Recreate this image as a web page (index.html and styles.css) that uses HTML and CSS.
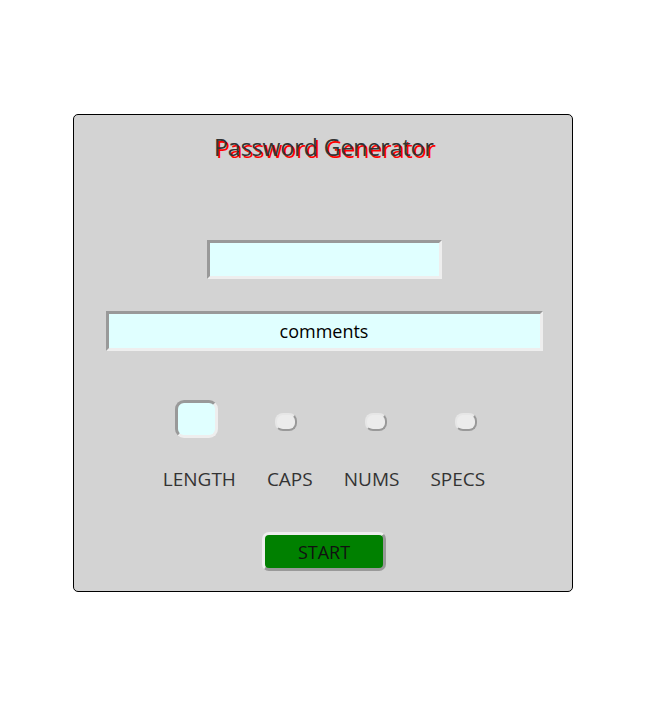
FILE: index.html
```html
<!DOCTYPE html>
<html>
<head>
<meta charset="utf-8">
<link rel="stylesheet" href="styles.css">
</head>
<body>
<div class="card">
  <h1 class="title">Password Generator</h1>
  <input class="field field-short" type="text" value="">
  <input class="field field-long" type="text" value="comments">
  <div class="boxes">
    <div class="cell"><span class="box box-big"></span></div>
    <div class="cell"><span class="box box-small"></span></div>
    <div class="cell"><span class="box box-small"></span></div>
    <div class="cell"><span class="box box-small"></span></div>
  </div>
  <div class="labels">
    <span>LENGTH</span>
    <span>CAPS</span>
    <span>NUMS</span>
    <span>SPECS</span>
  </div>
  <button class="start">START</button>
</div>
</body>
</html>
```
FILE: styles.css
```css
html, body {
  margin: 0;
  padding: 0;
  background: #ffffff;
}
body {
  font-family: "Open Sans", "Noto Sans", sans-serif;
  color: #333333;
}
.card {
  box-sizing: border-box;
  width: 500px;
  height: 478px;
  margin: 114px 0 0 73px;
  padding-left: 2px;
  background: #d3d3d3;
  border: 1px solid #000000;
  border-radius: 5px;
  display: flex;
  flex-direction: column;
  align-items: center;
}
.title {
  margin: 15px 0 0 0;
  font-size: 23px;
  font-weight: normal;
  line-height: 34px;
  color: #333333;
  text-shadow: 2px 2px 0 #ff0000;
}
.field {
  box-sizing: border-box;
  background: #e0ffff;
  border: 3px solid;
  border-color: #999999 #eeeeee #eeeeee #999999;
  font-family: "Open Sans", "Noto Sans", sans-serif;
  font-size: 18px;
  color: #000000;
  text-align: center;
  padding: 0;
  outline: none;
}
.field-short {
  width: 235px;
  height: 39px;
  margin-top: 76px;
}
.field-long {
  width: 437px;
  height: 40px;
  margin-top: 32px;
}
.boxes {
  display: flex;
  align-items: center;
  margin-top: 49px;
  padding-left: 14px;
  height: 38px;
}
.cell {
  width: 90px;
  display: flex;
  justify-content: center;
  align-items: center;
}
.box {
  box-sizing: border-box;
  display: block;
}
.box-big {
  width: 43px;
  height: 38px;
  background: #e0ffff;
  border: 3px solid;
  border-color: #999999 #eeeeee #eeeeee #999999;
  border-radius: 9px;
}
.box-small {
  width: 22px;
  height: 18px;
  margin-top: 5px;
  background: #ececec;
  border: 2px solid;
  border-color: #e6e6e6 #999999 #999999 #e6e6e6;
  border-radius: 8px;
}
.labels {
  display: flex;
  gap: 31px;
  margin-top: 28px;
  font-size: 19px;
  line-height: 26px;
  color: #333333;
}
.start {
  box-sizing: border-box;
  width: 124px;
  height: 39px;
  margin-top: 40px;
  background: #008000;
  border: 3px solid;
  border-color: #eeeeee #999999 #999999 #eeeeee;
  border-radius: 7px;
  font-family: "Open Sans", "Noto Sans", sans-serif;
  font-size: 18px;
  color: #111111;
  padding: 0;
}
```
